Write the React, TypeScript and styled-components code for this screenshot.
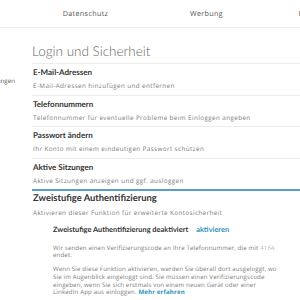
import React from 'react'
import styled, { createGlobalStyle } from 'styled-components'

const GlobalStyle = createGlobalStyle`
  html, body {
    margin: 0;
    padding: 0;
    background: #fff;
  }
  body {
    font-family: "Open Sans", Lato, "Liberation Sans", sans-serif;
    color: #333;
    overflow: hidden;
    text-rendering: geometricPrecision;
  }
`

const Page = styled.div`
  width: 300px;
  height: 300px;
  overflow: hidden;
`

const Nav = styled.nav`
  display: flex;
  height: 28px;
  padding-left: 25px;
  border-bottom: 1px solid #ececec;
  box-sizing: border-box;
  white-space: nowrap;
`

const NavItem = styled.div`
  flex: 0 0 121px;
  display: flex;
  align-items: center;
  justify-content: center;
  font-size: 7.2px;
  letter-spacing: 0.35px;
  color: #555;
`

const Body = styled.div`
  display: flex;
`

const Sidebar = styled.aside`
  flex: 0 0 32px;
  overflow: hidden;
  padding-top: 48px;
`

const SideItem = styled.div`
  display: flex;
  justify-content: flex-end;
  padding-right: 17px;
  font-size: 6.2px;
  color: #555;
  white-space: nowrap;
`

const Main = styled.main`
  flex: 0 0 300px;
`

const Title = styled.h1`
  margin: 0;
  padding-top: 14px;
  height: 35px;
  box-sizing: border-box;
  font-family: Lato, "Open Sans", sans-serif;
  font-size: 13.5px;
  line-height: 18px;
  font-weight: 300;
  color: #666;
`

const List = styled.div`
  border-top: 1px solid #ececec;
`

const Row = styled.div<{ $active?: boolean; $last?: boolean }>`
  padding: 2px 0 3.5px 1px;
  border-bottom: ${({ $active, $last }) =>
    $active ? '2px solid #5a9ec6' : $last ? 'none' : '1px solid #ececec'};
`

const RowTitle = styled.div<{ $big?: boolean }>`
  font-family: Lato, "Open Sans", sans-serif;
  font-size: ${({ $big }) => ($big ? '9.4px' : '8px')};
  line-height: 12px;
  font-weight: 700;
  color: #333;
`

const RowText = styled.div`
  margin-top: 3px;
  font-size: 6.3px;
  line-height: 10px;
  letter-spacing: 0.4px;
  color: #7a7a7a;
`

const Detail = styled.div`
  padding: 3px 0 0 21px;
  width: 228px;
`

const Status = styled.div`
  display: flex;
  gap: 8px;
  font-family: Lato, "Open Sans", sans-serif;
  font-size: 7.4px;
  line-height: 10px;
  font-weight: 700;
  color: #333;
`

const Link = styled.a`
  color: #2e8fbd;
  font-weight: 700;
  text-decoration: none;
`

const Para = styled.p<{ $gap: number }>`
  margin: ${({ $gap }) => $gap}px 0 0;
  font-size: 6.1px;
  line-height: 7.8px;
  letter-spacing: 0.15px;
  color: #7a7a7a;
`

const Masked = styled.span`
  color: #bbb;
  filter: blur(0.5px);
`

const rows = [
  { title: 'E-Mail-Adressen', text: 'E-Mail-Adressen hinzufügen und entfernen' },
  { title: 'Telefonnummern', text: 'Telefonnummer für eventuelle Probleme beim Einloggen angeben' },
  { title: 'Passwort ändern', text: 'Ihr Konto mit einem eindeutigen Passwort schützen' },
  { title: 'Aktive Sitzungen', text: 'Aktive Sitzungen anzeigen und ggf. ausloggen', active: true },
]

const App = () => {
  return (
    <Page>
      <GlobalStyle />
      <Nav>
        <NavItem>Datenschutz</NavItem>
        <NavItem>Werbung</NavItem>
        <NavItem>Kommunikation</NavItem>
      </Nav>
      <Body>
        <Sidebar>
          <SideItem>Kontoeinstellungen</SideItem>
        </Sidebar>
        <Main>
          <Title>Login und Sicherheit</Title>
          <List>
            {rows.map((r) => (
              <Row key={r.title} $active={r.active}>
                <RowTitle>{r.title}</RowTitle>
                <RowText>{r.text}</RowText>
              </Row>
            ))}
            <Row $last>
              <RowTitle $big>Zweistufige Authentifizierung</RowTitle>
              <RowText>Aktivieren dieser Funktion für erweiterte Kontosicherheit</RowText>
            </Row>
            <Detail>
              <Status>
                <span>Zweistufige Authentifizierung deaktiviert</span>
                <Link href="#">aktivieren</Link>
              </Status>
              <Para $gap={9}>
                Wir senden einen Verifizierungscode an Ihre Telefonnummer, die mit <Masked>4164</Masked> endet.
              </Para>
              <Para $gap={6}>
                Wenn Sie diese Funktion aktivieren, werden Sie überall dort ausgeloggt, wo Sie im Augenblick
                eingeloggt sind. Sie müssen einen Verifizierungscode eingeben, wenn Sie sich erstmals von einem
                neuen Gerät oder einer LinkedIn App aus einloggen. <Link href="#">Mehr erfahren</Link>
              </Para>
            </Detail>
          </List>
        </Main>
      </Body>
    </Page>
  )
}

export default App
